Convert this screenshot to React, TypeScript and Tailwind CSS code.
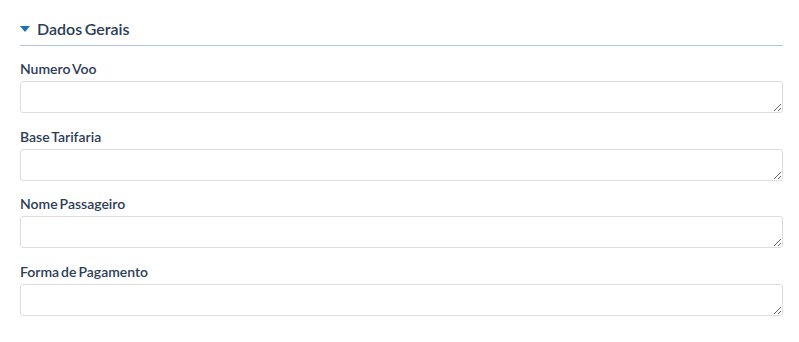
import React from "react";

const fields = ["Numero Voo", "Base Tarifaria", "Nome Passageiro", "Forma de Pagamento"];

export default function App() {
  return (
    <div className="w-[799px] h-[342px] bg-white px-[20px] pt-[16px]" style={{ fontFamily: "Lato, 'Open Sans', sans-serif" }}>
      <div className="flex items-center gap-[7px] pb-[4px] border-b border-[#a9c6e8] h-[30px] w-[763px]">
        <svg width="10" height="6" viewBox="0 0 10 6" className="mt-[1px]">
          <polygon points="0,0 10,0 5,6" fill="#1f6fb8" />
        </svg>
        <span className="text-[16px] leading-[20px] font-semibold text-[#2b3c55] [word-spacing:-1.5px]">Dados Gerais</span>
      </div>
      <div className="flex flex-col gap-[13.67px] mt-[13px] w-[763px]">
        {fields.map((f) => (
          <div key={f} className="flex flex-col">
            <label className="text-[14px] leading-[20px] font-semibold text-[#2b3c55] mb-[2px] [word-spacing:-1.5px]">{f}</label>
            <textarea className="h-[32px] w-full border border-[#dddddd] rounded-[3px] bg-white resize-y" rows={1} />
          </div>
        ))}
      </div>
    </div>
  );
}
